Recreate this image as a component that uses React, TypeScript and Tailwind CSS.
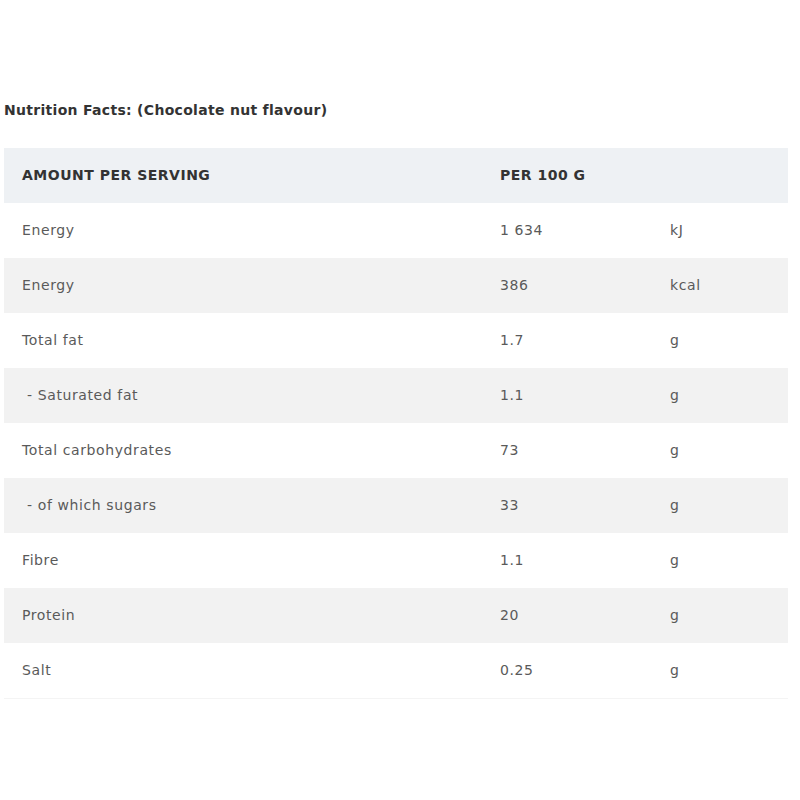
import React from "react";

const rows: [string, string, string][] = [
  ["Energy", "1 634", "kJ"],
  ["Energy", "386", "kcal"],
  ["Total fat", "1.7", "g"],
  ["\u00a0- Saturated fat", "1.1", "g"],
  ["Total carbohydrates", "73", "g"],
  ["\u00a0- of which sugars", "33", "g"],
  ["Fibre", "1.1", "g"],
  ["Protein", "20", "g"],
  ["Salt", "0.25", "g"],
];

export default function App() {
  return (
    <div className="w-[800px] h-[800px] bg-white pt-[99px] pl-[4px] pr-[12px]" style={{ fontFamily: '"DejaVu Sans", sans-serif' }}>
      <div className="text-[14px] font-semibold tracking-[0.3px] text-[#333] leading-[22px] mb-[27px]">Nutrition Facts: (Chocolate nut flavour)</div>
      <div className="w-[784px] border-b border-[#f4f4f4]">
        <div className="grid grid-cols-[478px_170px_136px] h-[55px] items-center bg-[#eef1f4] text-[14px] tracking-[0.5px] font-semibold text-[#333]">
          <div className="pl-[18px]">AMOUNT PER SERVING</div>
          <div className="pl-[18px]">PER 100 G</div>
          <div></div>
        </div>
        {rows.map((r, i) => (
          <div
            key={i}
            className={`grid grid-cols-[478px_170px_136px] h-[55px] items-center text-[14px] tracking-[0.6px] text-[#5a5a5a] ${i % 2 === 1 ? "bg-[#f2f2f2]" : "bg-white"}`}
          >
            <div className="pl-[18px] whitespace-pre">{r[0]}</div>
            <div className="pl-[18px]">{r[1]}</div>
            <div className="pl-[18px]">{r[2]}</div>
          </div>
        ))}
      </div>
    </div>
  );
}
